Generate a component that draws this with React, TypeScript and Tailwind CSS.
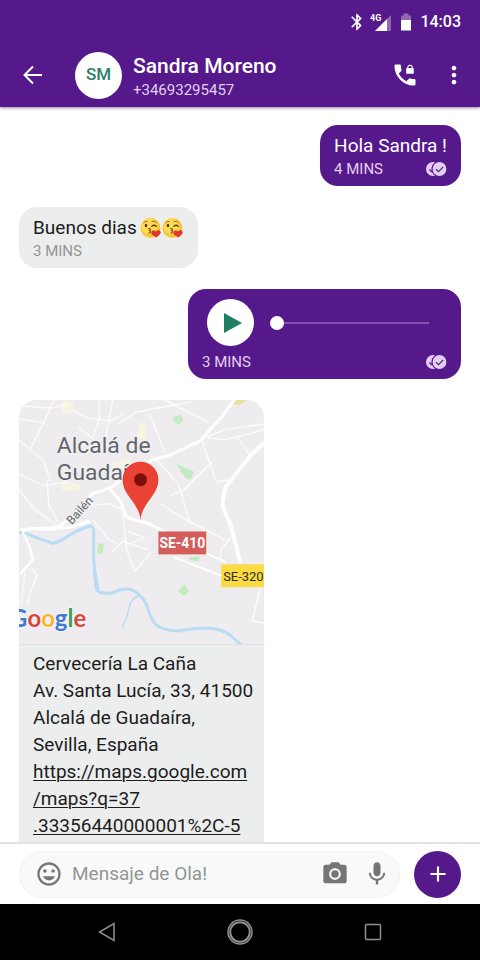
import { useState } from 'react'
import type { ReactNode } from 'react'
import { MdAdd, MdBluetooth, MdCameraAlt, MdInsertEmoticon, MdMic, MdMoreVert } from 'react-icons/md'

const Signal = () => (
  <svg viewBox="0 0 22 20" className="w-[22px] h-5" aria-hidden="true">
    <path d="M5 19 L21 3 V19 Z" fill="#fff" fillOpacity=".35" />
    <path d="M5 19 L17 7 V19 Z" fill="#fff" />
    <path d="M0 0 H13 V9 L12 10 H0 Z" fill="#55198b" />
    <text x="0" y="9" fontSize="9" fontWeight="700" fontFamily="Roboto, sans-serif" fill="#fff">4G</text>
  </svg>
)

const Battery = () => (
  <svg viewBox="0 0 12 18" className="w-3 h-[18px]" aria-hidden="true">
    <path d="M1 2.5 H3.5 V0.5 H8.5 V2.5 H11 V7 H1 Z" fill="#fff" fillOpacity=".35" />
    <path d="M1 7 H11 V17.5 H1 Z" fill="#fff" />
  </svg>
)

const PhoneLock = () => (
  <svg viewBox="0 0 24 24" className="w-7 h-7" fill="currentColor" aria-hidden="true">
    <path d="M20 15.5c-1.25 0-2.45-.2-3.57-.57-.35-.11-.74-.03-1.02.24l-2.2 2.2c-2.83-1.44-5.15-3.75-6.59-6.59l2.2-2.21c.28-.26.36-.65.25-1C8.7 6.45 8.5 5.25 8.5 4c0-.55-.45-1-1-1H4c-.55 0-1 .45-1 1 0 9.39 7.61 17 17 17 .55 0 1-.45 1-1v-3.5c0-.55-.45-1-1-1z" />
    <rect x="13" y="6" width="6.5" height="5" rx="0.8" />
    <path d="M14.4 6.5 V5.6 A1.9 1.9 0 0 1 18.200 5.6 V6.5" fill="none" stroke="currentColor" strokeWidth="0.9" />
  </svg>
)

const Ticks = () => (
  <svg viewBox="0 0 22 16" className="w-[22px] h-4" role="img" aria-label="Leído">
    <circle cx="8" cy="8" r="7" fill="#e6cdf6" />
    <path d="M4.5 8.5 L7 11" stroke="#55198b" strokeWidth="1.5" fill="none" />
    <circle cx="14.5" cy="8" r="7.5" fill="#e6cdf6" stroke="#55198b" strokeWidth="1.2" />
    <path d="M11 8.2 L13.5 10.7 L18.2 6" stroke="#4a3a63" strokeWidth="1.3" fill="none" />
  </svg>
)

const Kiss = () => (
  <svg viewBox="0 0 22 22" className="w-[22px] h-[22px]" role="img" aria-label="😘">
    <circle cx="10.5" cy="11" r="10" fill="#fbc536" />
    <circle cx="9.5" cy="9.5" r="8" fill="#fddc52" />
    <path d="M3.5 5.8 Q5 3.8 7.2 4.4" stroke="#a5682a" strokeWidth="1" fill="none" strokeLinecap="round" />
    <path d="M12 4.4 Q14.5 3.4 16.6 5.4" stroke="#a5682a" strokeWidth="1" fill="none" strokeLinecap="round" />
    <ellipse cx="6" cy="8.6" rx="1.3" ry="1.8" fill="#5d3b1b" />
    <path d="M11.8 9.4 Q14 7.2 16.4 9.4" stroke="#5d3b1b" strokeWidth="1.3" fill="none" strokeLinecap="round" />
    <path d="M8.6 11.6 Q11.6 11.8 9.6 13.6 Q12 14.4 9 16.2" stroke="#8c4a1e" strokeWidth="1.2" fill="none" strokeLinecap="round" />
    <path d="M16.5 20.6 L11.6 17.4 Q10.6 14.6 13 13.6 Q15 13 16 14.6 Q17.4 12.6 19.6 13.4 Q21.6 14.6 20.4 16.8 Z" fill="#e33529" />
  </svg>
)

const MapPreview = () => (
  <svg viewBox="0 0 246 245" className="block w-full h-auto" fontFamily="Roboto, sans-serif" role="img" aria-label="Alcalá de Guadaíra">
    <rect width="246" height="245" fill="#efecef" />

    {/* built-up patches */}
    <g fill="#f7f4e0">
      <path d="M45 0 L55 2 L52 14 L42 13 Z" />
      <path d="M121 22 L128 24 L128 40 L119 38 Z" />
      <path d="M92 64 L112 58 L110 72 L96 70 Z" />
      <path d="M41 82 L60 84 L62 90 L44 92 Z" />
    </g>
    <path d="M215 0 H229 L221 5 L214 4 Z" fill="#e3e39a" />

    {/* parks */}
    <g fill="#c3ebc0">
      <path d="M157 16 L163 15 L165 20 L160 25 L154 20 Z" />
      <path d="M158 64 L176 72 L172 80 L166 77 Z" />
      <path d="M80 144 L85 144 L84 155 L78 153 Z" />
      <path d="M170 158 L182 157 L180 162 L172 161 Z" />
      <path d="M166 185 L171 192 L166 197 L159 192 Z" />
    </g>

    <g fill="none" stroke="#fff" strokeLinecap="round" strokeLinejoin="round">
      <g strokeWidth="1.5" strokeOpacity=".75">
        <path d="M0 19 L26 23" />
        <path d="M0 6 L34 8 L46 4" />
        <path d="M12 48 L26 20 L35 0" />
        <path d="M0 40 L14 52 L24 60 L32 82" />
        <path d="M54 10 L68 18 L92 21 L104 14" />
        <path d="M75 36 L81 18 L80 0" />
        <path d="M87 38 L94 0" />
        <path d="M60 28 L76 40" />
        <path d="M131 14 L140 36 L146 52" />
        <path d="M146 0 L166 10 L190 22" />
        <path d="M100 24 L118 12 L172 2" />
        <path d="M186 38 L206 30 L246 24" />
        <path d="M190 38 L206 40 L220 37 L246 30" />
        <path d="M184 42 L198 82 L212 80" />
        <path d="M219 37 L232 56" />
        <path d="M152 96 L166 90 L194 62" />
        <path d="M138 60 L160 84 L172 124" />
        <path d="M142 104 L160 116 L206 140" />
        <path d="M0 90 L16 110 L38 126" />
        <path d="M0 74 L24 86 L50 82" />
        <path d="M28 82 L30 106 L40 124" />
        <path d="M74 106 L90 104 L104 110" />
        <path d="M74 120 L90 140 L98 144" />
        <path d="M104 112 L108 150 L116 172 L132 154" />
        <path d="M110 132 L126 138 L112 144" />
        <path d="M94 152 L104 142 L128 150" />
        <path d="M212 139 L203 150 L202 160" />
        <path d="M14 170 L18 176 L12 192 L8 206" />
        <path d="M6 174 L2 206" />
        <path d="M242 190 L234 222 L246 224" />
      </g>
      <path d="M14 129 L36 130 L58 114 L74 94 L92 88 L112 74 L134 60 L150 56 L182 41 L206 14 L216 0" strokeWidth="3" />
      <path d="M92 90 L102 102 L108 118 L130 124 L164 142" strokeWidth="3" />
      <path d="M70 122 L50 128 L14 129 L0 131" strokeWidth="3" />
      <path d="M156 158 L202 176" strokeWidth="2" />
      <path d="M184 152 L206 162" strokeWidth="2" />
      <path d="M246 43 L234 54 L218 74 L207 88 L204 106 L212 124 L222 162" strokeWidth="4" />
      <path d="M4 133 L10 146 L14 160 L2 174" strokeWidth="2.5" />
    </g>

    {/* river */}
    <g fill="none" stroke="#b8dcf3" strokeLinecap="round" strokeLinejoin="round">
      <path d="M7 134 Q22 140 34 144 Q42 142 50 136 Q60 130 70 127 Q75 126 75 132 L75 160 Q76 172 77 180 Q76 192 81 193 Q92 196 100 191 Q112 187 120 195 Q126 200 129 208 Q133 222 138 226 Q144 231 160 232 Q176 229 189 229 Q204 230 212 236 L222 245" strokeWidth="3" />
      <path d="M76 174 L79 191" strokeWidth="4" />
      <path d="M121 196 Q112 200 111 207 Q109 218 104 228" strokeWidth="1.5" />
    </g>
    <circle cx="1" cy="133" r="2" fill="#b8dcf3" />

    <g fill="#63676b" stroke="#f3f1f3" strokeWidth="2" paintOrder="stroke">
      <text x="38" y="53" fontSize="23">Alcalá de</text>
      <text x="38" y="80" fontSize="23">Guadaíra</text>
      <text x="61" y="115" fontSize="12" textAnchor="middle" transform="rotate(-48 61 111)">Bailén</text>
    </g>

    <rect x="140" y="132" width="48" height="23" fill="#d45e5c" />
    <text x="164" y="149" fontSize="14" fontWeight="700" textAnchor="middle" fill="#fff">SE-410</text>
    <rect x="203" y="165" width="43" height="23" fill="#fadb43" />
    <text x="205" y="182" fontSize="13" fill="#2d2b25">SE-320</text>

    <path d="M122 121 C121 103 104 96 104 80 A18 18 0 0 1 140 80 C140 96 123 103 122 121 Z" fill="#ea4335" />
    <circle cx="122" cy="80" r="6.5" fill="#7d0f0c" />

    <text x="-9" y="228" fontSize="24" fontWeight="700" fontFamily="Lato, sans-serif" stroke="#fff" strokeWidth="1" paintOrder="stroke">
      <tspan fill="#4279d8">G</tspan>
      <tspan fill="#d8453b">o</tspan>
      <tspan fill="#f0b92b">o</tspan>
      <tspan fill="#4279d8">g</tspan>
      <tspan fill="#3a9e57">l</tspan>
      <tspan fill="#d8453b">e</tspan>
    </text>
  </svg>
)

type BubbleProps = {
  mine?: boolean
  time: string
  children: ReactNode
}

function Bubble({ mine, time, children }: BubbleProps) {
  return (
    <div
      className={
        mine
          ? 'self-end rounded-[18px] bg-[#55198b] px-[14px] pb-[7px] pt-px text-white'
          : 'self-start rounded-[18px] bg-[#eceeee] px-[14px] pb-[7px] pt-px text-[#1c1c1c]'
      }
    >
      {children}
      <div className="flex h-5 items-center justify-between">
        <span className={mine ? 'text-[15px] text-[#e3d0f2]' : 'text-[15px] text-[#939595]'}>{time}</span>
        {mine && <Ticks />}
      </div>
    </div>
  )
}

export default function App() {
  const [message, setMessage] = useState('')
  const [position, setPosition] = useState(0)

  return (
    <div className="flex h-screen flex-col overflow-hidden bg-white font-[Roboto,sans-serif]">
      {/* Header */}
      <header className="relative z-10 shrink-0 bg-[#55198b] text-white shadow-[0_1px_3px_rgba(50,20,90,0.5)]">
        <div className="flex h-[43px] items-center justify-end gap-2 pr-[19px]">
          <div className="flex items-center gap-[3px]">
            <MdBluetooth size={20} />
            <Signal />
          </div>
          <Battery />
          <span className="text-[16px] font-medium">14:03</span>
        </div>
        <div className="flex h-16 items-center pl-[19px] pr-3">
          <button aria-label="Atrás" className="p-1">
            <svg viewBox="0 0 20 20" className="h-5 w-5" fill="none" stroke="currentColor" strokeWidth="2">
              <path d="M19 10 H2 M10 1.5 L1.5 10 L10 18.5" />
            </svg>
          </button>
          <div className="ml-7 flex h-[47px] w-[47px] items-center justify-center rounded-full bg-white text-[17px] font-medium text-[#2a8068]">
            SM
          </div>
          <div className="ml-[11px] flex-1 pt-[6px]">
            <h1 className="text-[21px] font-medium leading-6">Sandra Moreno</h1>
            <p className="text-[15px] leading-6 text-[#e3d0f2]">+34693295457</p>
          </div>
          <button aria-label="Llamar">
            <PhoneLock />
          </button>
          <button aria-label="Más opciones" className="ml-[21px]">
            <MdMoreVert size={28} />
          </button>
        </div>
      </header>

      {/* Messages */}
      <main className="flex min-h-0 flex-1 flex-col gap-[21px] overflow-hidden px-[19px] pt-[18px]">
        <Bubble mine time="4 MINS">
          <p className="pt-[6px] text-[19px] leading-[27px]">Hola Sandra !</p>
        </Bubble>

        <Bubble time="3 MINS">
          <p className="flex items-center pt-[6px] text-[19px] leading-[27px]">
            <span className="mr-[3px]">Buenos dias</span>
            <Kiss />
            <Kiss />
          </p>
        </Bubble>

        <Bubble mine time="3 MINS">
          <div className="flex items-center gap-4 pb-[6px] pl-[5px] pr-[18px] pt-[9px]">
            <button aria-label="Reproducir" className="flex h-[47px] w-[47px] items-center justify-center rounded-full bg-white">
              <svg viewBox="0 0 20 22" className="ml-1 h-[22px] w-5">
                <path d="M1 1 L19 11 L1 21 Z" fill="#1f7f62" />
              </svg>
            </button>
            <input
              type="range"
              min={0}
              max={100}
              value={position}
              onChange={(e) => setPosition(Number(e.target.value))}
              aria-label="Posición del audio"
              className="h-[14px] w-[159px] appearance-none bg-transparent [&::-webkit-slider-runnable-track]:h-[2px] [&::-webkit-slider-runnable-track]:bg-[#8252ad] [&::-webkit-slider-thumb]:-mt-[6px] [&::-webkit-slider-thumb]:h-[14px] [&::-webkit-slider-thumb]:w-[14px] [&::-webkit-slider-thumb]:appearance-none [&::-webkit-slider-thumb]:rounded-full [&::-webkit-slider-thumb]:bg-white"
            />
          </div>
        </Bubble>

        <article className="w-[245px] shrink-0 self-start overflow-hidden rounded-[18px] bg-[#eceeee] text-[#1c1c1c]">
          <MapPreview />
          <div className="border-t border-[#dfe1e1] pb-8 pl-[14px] pr-1 pt-[5px] text-[19px] leading-[27px]">
            <p>
              Cervecería La Caña
              <br />
              Av. Santa Lucía, 33, 41500
              <br />
              Alcalá de Guadaíra,
              <br />
              Sevilla, España
            </p>
            <a href="#ubicacion" className="underline decoration-1 underline-offset-2">
              https://maps.google.com
              <br />
              /maps?q=37
              <br />
              .33356440000001%2C-5
            </a>
          </div>
        </article>
      </main>

      {/* Composer */}
      <footer className="flex h-[62px] shrink-0 items-center gap-[14px] border-t-2 border-[#e2e2e2] bg-white px-[19px]">
        <div className="flex h-[47px] min-w-0 flex-1 items-center rounded-full border border-[#f1f4f4] bg-[#f8fafa] pl-[15px] pr-2 text-[#757575]">
          <button aria-label="Emoticonos">
            <MdInsertEmoticon size={28} />
          </button>
          <input
            type="text"
            value={message}
            onChange={(e) => setMessage(e.target.value)}
            placeholder="Mensaje de Ola!"
            aria-label="Mensaje de Ola!"
            className="ml-[9px] min-w-0 flex-1 bg-transparent text-[19px] text-[#1c1c1c] outline-none placeholder:text-[#939595]"
          />
          <button aria-label="Cámara">
            <MdCameraAlt size={28} />
          </button>
          <button aria-label="Grabar audio" className="ml-[14px]">
            <MdMic size={28} />
          </button>
        </div>
        <button aria-label="Adjuntar" className="flex h-[47px] w-[47px] items-center justify-center rounded-full bg-[#55198b] text-white">
          <MdAdd size={26} />
        </button>
      </footer>

      {/* System navigation */}
      <nav className="flex h-14 shrink-0 items-center justify-center gap-[108px] bg-black text-[#8f8f8f]">
        <button aria-label="Volver">
          <svg viewBox="0 0 24 24" className="h-6 w-6" fill="none" stroke="currentColor" strokeWidth="1.5">
            <path d="M19 3.5 V20.5 L4.5 12 Z" />
          </svg>
        </button>
        <button aria-label="Inicio">
          <svg viewBox="0 0 26 26" className="h-[26px] w-[26px]" fill="none" stroke="currentColor">
            <circle cx="13" cy="13" r="12" strokeWidth="1.5" />
            <circle cx="13" cy="13" r="9.8" strokeWidth="2" />
          </svg>
        </button>
        <button aria-label="Recientes">
          <svg viewBox="0 0 24 24" className="h-6 w-6" fill="none" stroke="currentColor" strokeWidth="1.5">
            <rect x="4.5" y="4.5" width="15" height="15" rx="1" />
          </svg>
        </button>
      </nav>
    </div>
  )
}
